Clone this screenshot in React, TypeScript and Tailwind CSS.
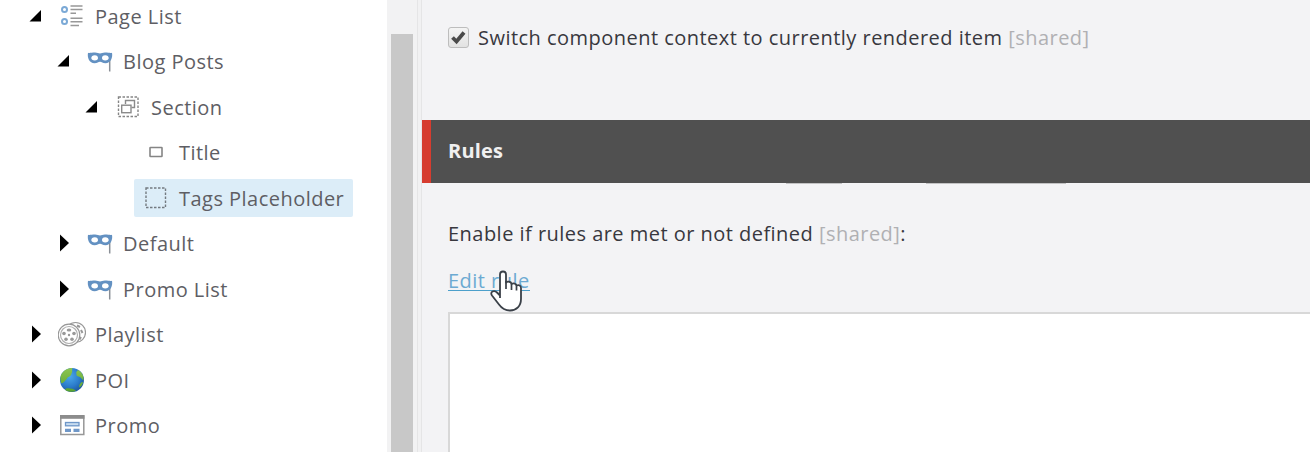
import type { ReactNode } from "react";

function ListIcon() {
  return (
    <svg width="28" height="28" viewBox="-2 -2 28 28" fill="none">
      <g stroke="#7ba9d6" strokeWidth="2">
        <circle cx="4.500" cy="5.500" r="2.500" />
        <circle cx="4.500" cy="17.600" r="2.500" />
      </g>
      <g stroke="#989898" strokeWidth="1.500">
        <path d="M10.500 2H22.500M10.500 5.600H22.500M10.500 9.200H16M10.500 14.200H22.500M10.500 17.800H22.500M10.500 21.400H19" />
      </g>
    </svg>
  );
}

function MaskIcon() {
  return (
    <svg width="28" height="28" viewBox="-2 -2 28 28" fill="none">
      <path d="M21.700 10V22.500" stroke="#8a8f96" strokeWidth="1.500" />
      <path
        fillRule="evenodd"
        fill="#6391c2"
        d="M0 3.800C1.500 4.400 3.500 3.600 7 3.600C9.500 3.600 10.500 4.400 12 4.400C13.500 4.400 14.500 3.600 17 3.600C20.500 3.600 22.500 4.400 24 3.800C25 9 22.500 14.200 17.500 14.200C14.500 14.200 13.800 12.700 12 12.700C10.200 12.700 9.500 14.200 6.500 14.200C1.500 14.200 -1 9 0 3.800ZM6.800 6.300C4.600 6.300 3.300 7.500 3.300 9C3.300 10.500 4.600 11.500 6.800 11.500C9 11.500 10 10.400 10 9C10 7.500 9 6.300 6.800 6.300ZM17.200 6.300C15 6.300 14 7.500 14 9C14 10.400 15 11.500 17.200 11.500C19.400 11.500 20.700 10.500 20.700 9C20.700 7.500 19.400 6.300 17.200 6.300Z"
      />
    </svg>
  );
}

function SectionIcon() {
  return (
    <svg width="28" height="28" viewBox="-2 -2 28 28" fill="none">
      <rect x="2.500" y="2" width="19.500" height="19.500" stroke="#858585" strokeWidth="1.400" strokeDasharray="2.500 1.500" />
      <path d="M9.500 9V5.500H18.500V12.500H15.500" stroke="#8a8a8a" strokeWidth="1.400" />
      <rect x="5.700" y="10.200" width="9.300" height="7.500" stroke="#8a8a8a" strokeWidth="1.400" />
    </svg>
  );
}

function TitleIcon() {
  return (
    <svg width="28" height="28" viewBox="-2 -2 28 28" fill="none">
      <rect x="6" y="7.500" width="12" height="9" rx=".5" stroke="#858585" strokeWidth="1.600" />
    </svg>
  );
}

function PlaceholderIcon() {
  return (
    <svg width="28" height="28" viewBox="-2 -2 28 28" fill="none">
      <rect x="2" y="2" width="19.500" height="19.500" stroke="#737a80" strokeWidth="1.400" strokeDasharray="2.500 1.500" />
    </svg>
  );
}

function ReelIcon() {
  return (
    <svg width="28" height="28" viewBox="-2 -2 28 28" fill="none" stroke="#979797" strokeWidth="1.200">
      <circle cx="15.500" cy="10.500" r="10" fill="#fff" />
      <path d="M17 3.500L20 5M21 8L22.500 11M21 15L19.500 17.500" strokeWidth="2" />
      <circle cx="9" cy="13" r="10.800" fill="#fff" />
      <circle cx="9" cy="13" r="8.500" stroke="#b0b0b0" />
      <g fill="#999" stroke="none">
        <circle cx="9" cy="13" r="1.200" />
        <ellipse cx="9" cy="8" rx="2.300" ry="1.600" />
        <circle cx="4" cy="11.500" r="1.800" />
        <circle cx="14" cy="11.500" r="1.800" />
        <circle cx="6" cy="17.300" r="1.800" />
        <circle cx="12" cy="17.300" r="1.800" />
      </g>
    </svg>
  );
}

function GlobeIcon() {
  return (
    <svg width="28" height="28" viewBox="-2 -2 28 28">
      <defs>
        <radialGradient id="sea" cx=".4" cy=".35" r=".7">
          <stop offset="0" stopColor="#4ba8ea" />
          <stop offset=".6" stopColor="#2b7ccb" />
          <stop offset="1" stopColor="#1d559c" />
        </radialGradient>
        <linearGradient id="land" x1="0" y1="0" x2="0" y2="1">
          <stop offset="0" stopColor="#8cc552" />
          <stop offset="1" stopColor="#58a22e" />
        </linearGradient>
      </defs>
      <circle cx="12" cy="12" r="12" fill="url(#sea)" />
      <path
        fill="url(#land)"
        d="M10.500 .1C6 .8 2.500 3.500 .8 7.500C.2 10 .3 13 1.200 15C2.500 16 3.500 14 5 13C6 11.500 7 11 7.500 9.500C9.500 8.500 11.500 7.500 11.500 5.500C13 4 11.500 3 12.500 .1ZM18 2C17 3.500 15.500 4 16.500 6C16 8 18 8.500 20 9L23.500 12.500C24.200 8 21.500 3.500 18 2ZM22 14C20 15 18.500 17.500 19.500 19.500C21 18.500 22.500 16.500 23 14.500ZM6 20.500C9 20 13 20.500 16 22.800C13 24.600 8 24 5 21.800Z"
      />
    </svg>
  );
}

function PromoIcon() {
  return (
    <svg width="28" height="28" viewBox="-2 -2 28 28">
      <rect x=".8" y="3" width="23" height="18.500" fill="#fff" stroke="#979797" strokeWidth="1.500" />
      <path d="M0 2H24.500V5.800H0Z" fill="#8c8c8c" />
      <rect x="5.500" y="9.500" width="13.500" height="3.300" fill="#c8dcf0" stroke="#6f97c8" strokeWidth="1.300" />
      <path d="M5 15.700H11V19H5ZM13.500 15.700H19.500V19H13.500Z" fill="#6f97c8" />
    </svg>
  );
}

type Item = {
  label: string;
  icon: ReactNode;
  level: string;
  open?: boolean;
  leaf?: boolean;
  selected?: boolean;
};

const items: Item[] = [
  { label: "Page List", icon: <ListIcon />, level: "pl-[24px]", open: true },
  { label: "Blog Posts", icon: <MaskIcon />, level: "pl-[52px]", open: true },
  { label: "Section", icon: <SectionIcon />, level: "pl-[80px]", open: true },
  { label: "Title", icon: <TitleIcon />, level: "pl-[108px]", leaf: true },
  { label: "Tags Placeholder", icon: <PlaceholderIcon />, level: "pl-[108px]", leaf: true, selected: true },
  { label: "Default", icon: <MaskIcon />, level: "pl-[52px]" },
  { label: "Promo List", icon: <MaskIcon />, level: "pl-[52px]" },
  { label: "Playlist", icon: <ReelIcon />, level: "pl-[24px]" },
  { label: "POI", icon: <GlobeIcon />, level: "pl-[24px]" },
  { label: "Promo", icon: <PromoIcon />, level: "pl-[24px]" },
];

function TreeRow({ item }: { item: Item }) {
  return (
    <div className={`flex h-[45.5px] shrink-0 items-center ${item.level}`}>
      <svg width="26" height="24" viewBox="0 0 26 24" className="shrink-0">
        {!item.leaf && <path d={item.open ? "M17 6V17.500H5.500Z" : "M8 3.500L17 12L8 20.500Z"} fill="#000" />}
      </svg>
      <div
        className={`flex h-[38px] items-center gap-[9px] rounded-[2px] pr-[9px] pl-[8px] ${item.selected ? "bg-[#dcedf8]" : ""}`}
      >
        {item.icon}
        <span className="pt-px text-[20px] leading-[37px] tracking-[0.47px] whitespace-nowrap text-[#5e5e64]">
          {item.label}
        </span>
      </div>
    </div>
  );
}

function HandCursor() {
  return (
    <svg width="36" height="46" viewBox="0 0 36 46" className="absolute top-[3px] left-[38px]">
      <path
        d="M14 30V6.500C14 2.500 20 2.500 20 6.500V14.500C21.500 13 25.300 13.500 25.500 16C27.500 14.700 30.300 15.500 30.500 17.500C33 16.500 35 17.500 35 20V31C35 38 30.500 42.500 24 42.500C18.500 42.500 15.500 40 13 36.500L6 27.500C3.500 24 8 21.500 11 24.500L14 27.500"
        fill="#fff"
        stroke="#3a4048"
        strokeWidth="1.800"
        strokeLinejoin="round"
      />
      <path d="M20 13V21M25.500 15.500V22M30.500 17V22.500" stroke="#3a4048" strokeWidth="1.700" />
    </svg>
  );
}

export default function App() {
  return (
    <div className="flex h-[452px] w-[1310px] overflow-hidden bg-[#f3f3f5] font-['Open_Sans','Noto_Sans',sans-serif] text-[20px] tracking-[0.47px]">
      <aside className="flex w-[387px] shrink-0 flex-col overflow-hidden bg-white">
        <div className="-mt-[7px] flex flex-col">
          {items.map((item) => (
            <TreeRow key={item.label} item={item} />
          ))}
        </div>
      </aside>
      <div className="flex w-[30px] shrink-0 flex-col bg-[#f2f2f3] pt-[34px] pl-[4px]">
        <div className="w-[22px] grow bg-[#c8c8c8]" />
      </div>
      <div className="w-[5px] shrink-0 border-x border-[#e5e5e6] bg-[#f1f1f2]" />
      <main className="flex min-w-0 grow flex-col">
        <div className="flex h-[120px] shrink-0 pt-[22px] pl-[26px]">
          <div className="mt-[5px] flex size-[21px] items-center justify-center rounded-[3px] border-[1.5px] border-[#bdbdbd] bg-gradient-to-b from-[#f4f4f4] to-[#e2e2e2]">
            <svg width="17" height="17" viewBox="0 0 17 17" fill="none">
              <path d="M2.500 8.500L6.500 12.500L14 3.500" stroke="#4a4a4a" strokeWidth="3.800" />
            </svg>
          </div>
          <span className="ml-[9px] leading-[31px] whitespace-nowrap text-[#38383e]">
            Switch component context to currently rendered item <span className="text-[#b0b0b3]">[shared]</span>
          </span>
        </div>
        <h2 className="flex h-[62.5px] shrink-0 items-center border-l-[9px] border-[#d63c2f] bg-[#505050] pl-[17px] font-bold tracking-[0.2px] text-[#f0f0f0]">
          Rules
        </h2>
        <div className="flex h-[1.5px] shrink-0 pl-[364px]">
          <div className="w-[56px] bg-[#c2c2c3]" />
          <div className="ml-[84px] w-[140px] bg-[#c2c2c3]" />
        </div>
        <div className="flex grow flex-col pl-[26px]">
          <div className="mt-[34px] h-[31px] leading-[31px] whitespace-nowrap text-[#38383e]">
            Enable if rules are met or not defined <span className="text-[#b0b0b3]">[shared]</span>:
          </div>
          <div className="relative mt-[16px] h-[31px] leading-[31px]">
            <a className="inline-block h-[26px] border-b-[1.5px] border-[#4c9fcb] text-[#6caad2]">Edit rule</a>
            <HandCursor />
          </div>
          <div className="mt-[16px] grow border-t-2 border-l-2 border-[#d8d8d8] bg-white" />
        </div>
      </main>
    </div>
  );
}
